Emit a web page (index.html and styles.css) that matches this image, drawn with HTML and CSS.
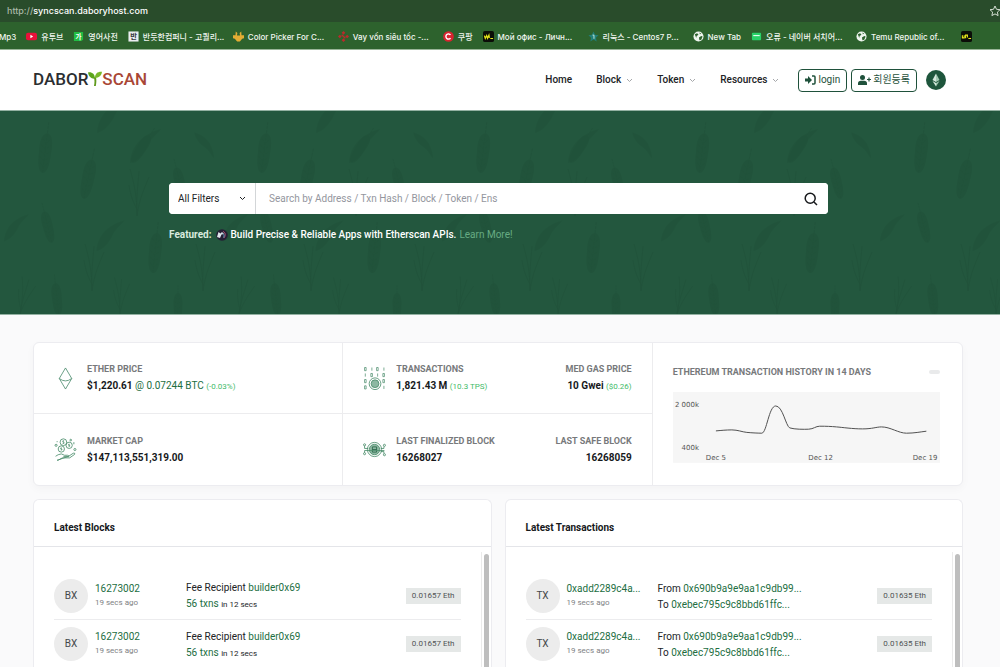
FILE: index.html
```html
<!DOCTYPE html>
<html lang="en">
<head>
<meta charset="utf-8">
<meta name="viewport" content="width=device-width, initial-scale=1">
<title>Dabory Scan</title>
<link rel="stylesheet" href="styles.css">
</head>
<body>
<div class="browser">
  <div class="address-bar">
    <span class="url"><span class="scheme">http://</span>syncscan.daboryhost.com</span>
    <svg class="star" viewBox="0 0 12 12" fill="none" stroke="#d5dfd3" stroke-width="1"><path d="M6 1l1.500 3.300 3.500.4-2.600 2.400.7 3.500L6 8.900l-3.100 1.700.7-3.500L1 4.700l3.500-.4z"/></svg>
  </div>
  <nav class="bookmarks" aria-label="Bookmarks">
    <a class="mark first" href="#">Mp3</a>
    <a class="mark" href="#"><svg viewBox="0 0 12 12"><rect y="2" width="12" height="8" rx="2.200" fill="#e8113a"/><path d="M4.800 4.200v3.600L7.800 6z" fill="#fff"/></svg><span>유투브</span></a>
    <a class="mark" href="#"><svg viewBox="0 0 12 12"><path d="M1 1h10v8.500L9 11H1z" fill="#22bd43"/><text x="6" y="9" text-anchor="middle" class="ico-ko light">가</text></svg><span>영어사전</span></a>
    <a class="mark long" href="#"><svg viewBox="0 0 12 12"><rect x=".5" y=".5" width="11" height="11" fill="#e9edf0"/><text x="6" y="9" text-anchor="middle" class="ico-ko dark">반</text></svg><span>반듯한컴퍼니 - 고퀄리...</span></a>
    <a class="mark long" href="#"><svg viewBox="0 0 12 12"><path d="M3 .5l1.800 1.800L4.300 5h3.400l-.5-2.700L9 .5l.3 4H12v3.300l-2 .7L7.500 11.500h-3L2 8.500l-2-.7V4.500h2.700z" fill="#e3ad34"/></svg><span>Color Picker For C...</span></a>
    <a class="mark long" href="#"><svg viewBox="0 0 12 12" fill="#b92a2b"><path d="M6 0l2 2-2 2-2-2zM6 8l2 2-2 2-2-2zM2 4l2 2-2 2-2-2zM10 4l2 2-2 2-2-2z"/><path d="M4 4l4 4" stroke="#b92a2b" stroke-width="1.500"/></svg><span>Vay vốn siêu tốc -...</span></a>
    <a class="mark" href="#"><svg viewBox="0 0 12 12"><circle cx="6" cy="6" r="5.800" fill="#d8232f"/><path d="M8.200 4.300a2.800 2.800 0 1 0 0 3.400" fill="none" stroke="#fff" stroke-width="1.500"/></svg><span>쿠팡</span></a>
    <a class="mark long" href="#"><svg viewBox="0 0 12 12"><rect width="12" height="12" rx="2" fill="#0b0d08"/><path d="M1.500 5l1 3L4 5l1 3 1.500-3.500L7 7.500M8 8.200h3" fill="none" stroke="#e5e619" stroke-width="1.300"/></svg><span>Мой офис - Личн...</span></a>
    <a class="mark long" href="#"><svg viewBox="0 0 12 12"><path d="M6 .5l1.700 3.700 3.800.5-2.800 2.700.7 4L6 9.400l-3.400 2 .7-4L.5 4.700l3.800-.5z" fill="#217f78"/><path d="M5 4.500h1.500v4" stroke="#cdeedf" fill="none"/></svg><span>리눅스 - Centos7 P...</span></a>
    <a class="mark" href="#"><svg viewBox="0 0 12 12"><use href="#globe"/></svg><span>New Tab</span></a>
    <a class="mark long" href="#"><svg viewBox="0 0 12 12"><rect x="1" y="2" width="10" height="8" rx="1" fill="#29d268"/><path d="M2.500 5h7" stroke="#e5fff0" stroke-width="1.200"/></svg><span>오류 - 네이버 서치어...</span></a>
    <a class="mark long" href="#"><svg viewBox="0 0 12 12"><use href="#globe"/></svg><span>Temu Republic of...</span></a>
    <a class="mark" href="#" aria-label="Office"><svg viewBox="0 0 12 12"><rect width="12" height="12" rx="2" fill="#0b0d08"/><path d="M1.500 4.500v3h2v-3M5 8V4.500h2V7M8 8.200h3" fill="none" stroke="#e5e619" stroke-width="1.200"/></svg></a>
  </nav>
</div>

<header class="site-header">
  <a class="logo" href="#" aria-label="Dabory Scan"><span>DABOR</span><svg viewBox="0 0 14 15"><path d="M6 15C6.700 11.500 6.700 8.500 5.800 6.500L8 6c.6 3 .4 6-.2 9z" fill="#5f9a1c"/><path d="M6.800 7.600C3.500 8 .8 6 0 1.500 3.800.8 7 3 6.800 7.600z" fill="#5ca51c"/><path d="M6.900 6.800C7 2.500 9.800.4 14 .8 13.500 4.500 11 7.200 6.900 6.800z" fill="#78b82a"/></svg><span class="scan">SCAN</span></a>
  <nav class="menu" aria-label="Main">
    <a href="#">Home</a>
    <a href="#">Block<svg viewBox="0 0 7 5"><path d="M1 1l2.500 2.500L6 1"/></svg></a>
    <a href="#">Token<svg viewBox="0 0 7 5"><path d="M1 1l2.500 2.500L6 1"/></svg></a>
    <a href="#">Resources<svg viewBox="0 0 7 5"><path d="M1 1l2.500 2.500L6 1"/></svg></a>
  </nav>
  <div class="account">
    <button type="button" class="btn"><svg width="11" height="10" viewBox="0 0 11 10"><path d="M0 3.500h3V1l4 4-4 4V6.500H0z" fill="#1f513b"/><path d="M7 1h2q1 0 1 1v6q0 1-1 1H7" fill="none" stroke="#1f513b" stroke-width="1.500"/></svg>login</button>
    <button type="button" class="btn"><svg width="13" height="10" viewBox="0 0 13 10" fill="#1f513b"><circle cx="4.500" cy="2.500" r="2.500"/><path d="M0 10V8.500Q0 5.700 3 5.700h3q3 0 3 2.800V10zM10.400 2.500h1.200v1.400H13v1.200h-1.400v1.400h-1.200V5.100H9V3.900h1.400z"/></svg>회원등록</button>
    <button type="button" class="network" aria-label="Network"><svg width="20" height="20" viewBox="0 0 20 20"><path d="M10 3.500L6.500 10l3.500 2z" fill="#d5e8dc"/><path d="M10 3.500l3.500 6.500-3.500 2z" fill="#a3c9b3"/><path d="M6.500 11l3.500 2v3.500z" fill="#d5e8dc"/><path d="M13.500 11L10 13v3.500z" fill="#a3c9b3"/></svg></button>
  </div>
</header>

<main>
<section class="hero">
  <svg class="wheat" aria-hidden="true">
    <defs>
      <symbol id="globe" viewBox="0 0 12 12"><circle cx="6" cy="6" r="5.500" fill="#eef5ee"/><path d="M2 3.500l2.500-1 1.500 1.500-2 1.500-.5 2zM6.500 7l2.500-1.500 1.500.5-1.500 3.500-2 .5zM7 1.500L9 3 7.500 3.500z" fill="#2d622d"/></symbol>
      <g id="ear"><path d="M0-20C5-19 7-12 6 0 6 12 4 20 0 20S-6 12-6 0C-7-12-5-19 0-20z" opacity=".6"/><path d="M-4-14l4 4 4-4M-5-8l5 4 5-4M-5-2l5 4 5-4M-5 4l5 4 5-4M-4 10l4 4 4-4M0-31V20" fill="none" stroke="#19432f" stroke-width="1" stroke-dasharray="3 1" opacity=".7"/></g>
      <path id="leaf" d="M-15 18C-14 4-6-10 16-16 14-12 6-8 2 2-2 10-8 16-15 18z" opacity=".5"/>
      <g id="grass" fill="none" stroke="#19432f" stroke-width="1" opacity=".7"><path d="M0 25C0 5-3-8-7-22M0 25C-1 5 1-5 2-20M0 25C2 8 8-4 12-14M1 20C-6 8-7 0-8-6"/></g>
      <pattern id="field" width="219" height="204" patternUnits="userSpaceOnUse" fill="#173f2c">
        <use href="#ear" transform="translate(45 42) rotate(7)"/>
        <use href="#ear" transform="translate(88 68) rotate(12)"/>
        <use href="#leaf" transform="translate(145 34)"/>
        <use href="#ear" transform="translate(141 38) rotate(33) scale(.8)"/>
        <use href="#leaf" transform="translate(112 4)"/>
        <use href="#grass" transform="translate(137 80)"/>
        <use href="#ear" transform="translate(48 116) rotate(-14) scale(.8)"/>
        <use href="#leaf" transform="translate(110 124) scale(.9)"/>
        <use href="#leaf" transform="translate(16 116) scale(.8)"/>
        <use href="#ear" transform="translate(155 142) rotate(6)"/>
        <use href="#grass" transform="translate(92 155)"/>
        <use href="#grass" transform="translate(203 155)"/>
        <use href="#grass" transform="translate(24 184) rotate(12) scale(.8)"/>
        <use href="#grass" transform="translate(120 184) scale(.8)"/>
        <use href="#ear" transform="translate(57 188) rotate(-6) scale(.8)"/>
        <use href="#ear" transform="translate(178 196) scale(.7)"/>
        <use href="#ear" transform="translate(180 72) rotate(-14) scale(.8)"/>
        <use href="#leaf" transform="translate(205 34) rotate(100) scale(.7)"/>
      </pattern>
    </defs>
    <rect width="100%" height="100%" fill="url(#field)"/>
  </svg>
  <div class="hero-inner">
    <form class="search">
      <div class="filter">
        <select aria-label="Filter"><option>All Filters</option></select>
        <svg viewBox="0 0 7 5"><path d="M1 1l2.500 2.500L6 1"/></svg>
      </div>
      <input type="text" aria-label="Search" placeholder="Search by Address / Txn Hash / Block / Token / Ens">
      <button type="button" aria-label="Search"><svg width="14" height="14" viewBox="0 0 14 14" fill="none" stroke="#17191c" stroke-width="1.500"><circle cx="6.200" cy="6.200" r="5"/><path d="M10 10l3 3"/></svg></button>
    </form>
    <p class="featured"><b>Featured:</b><svg width="12" height="12" viewBox="0 0 12 12"><circle cx="6" cy="6" r="5.800" fill="#251f35"/><path d="M1 8l1.500-5 2 1.500L6 3l2 2-2.500.5L4 9z" fill="#dfe5ea"/><path d="M7 2.500C10 3.500 9.500 7 8 9" fill="none" stroke="#bb5478"/><path d="M7 4.500c1.500 1 1 3 .5 4" fill="none" stroke="#61a7c9"/></svg><span>Build Precise &amp; Reliable Apps with Etherscan APIs.</span><a href="#">Learn More!</a></p>
  </div>
</section>

<div class="content">
<section class="stats">
  <div class="stat">
    <svg viewBox="0 0 22 24" fill="none" stroke="#3f8463" stroke-width=".8"><path d="M11 1L4.500 12 11 23l6.500-11zM4.500 12q6.500 5 13 0"/></svg>
    <div><h3>ETHER PRICE</h3><p>$1,220.61 <a href="#">@ 0.07244 BTC</a> <small>(-0.03%)</small></p></div>
  </div>
  <div class="stat">
    <svg viewBox="0 0 22 22" fill="none" stroke="#4b8d6c" stroke-width=".8"><g stroke-width=".7"><path d="M3 .5H1.500v3H3zM8.500.5v3M14.500.5H13v3h1.500zM20 .5v3M2.200 6.200v3M9 6.200H7.500v3H9zM14 6.200v3M20.500 6.200H19v3h1.500zM3 12H1.500v3H3zM3 18H1.500v3H3zM20.500 12H19v3h1.500zM20 18v3"/></g><circle cx="11.500" cy="16" r="5.600"/><circle cx="11.500" cy="16" r="3.700" fill="#8db8a2"/></svg>
    <div><h3>TRANSACTIONS</h3><p>1,821.43 M <small>(10.3 TPS)</small></p></div>
    <div class="end"><h3>MED GAS PRICE</h3><p>10 Gwei <small>($0.26)</small></p></div>
  </div>
  <div class="stat">
    <svg viewBox="0 0 22 22" fill="none" stroke="#4b8d6c" stroke-width=".8"><circle cx="9" cy="4" r="3.200"/><circle cx="14.500" cy="7" r="3"/><circle cx="7" cy="10.500" r="3"/><path d="M9.700 2.700H8.500v1.200h1v1.300H8.300M15 6h-1v1h1v1h-1M7.500 9.500h-1v1h1v1h-1"/><circle cx="2" cy="7" r="1"/><circle cx="20" cy="11" r="1"/><circle cx="16" cy="2" r=".8"/><path d="M19 4v2M3 3v1M1.500 17.500l2.500-1.500 3-.8 3 1.300h3q1.500 0 1 1.300H9M14 17.500l4.500-3q2-.4 1.200 1.200L15 19H8l-3.500 2-1.500.3z"/></svg>
    <div><h3>MARKET CAP</h3><p>$147,113,551,319.00</p></div>
  </div>
  <div class="stat">
    <svg viewBox="0 0 22 22" fill="none" stroke="#4b8d6c" stroke-width=".8"><circle cx="11" cy="11" r="6.800"/><circle cx="11" cy="11" r="5" fill="#8db8a2"/><path d="M9 8.500h4v5H9zM9 11h4" stroke="#286547"/><path d="M1.500 12h19M1.500 7.500V10H5M1.500 12v2M17 10h3V8M17 13h3v2"/><circle cx="1.500" cy="6.500" r="1"/><circle cx="1.500" cy="15" r="1"/><circle cx="20.500" cy="7" r="1"/><circle cx="20.500" cy="16" r="1"/></svg>
    <div><h3>LAST FINALIZED BLOCK</h3><p>16268027</p></div>
    <div class="end"><h3>LAST SAFE BLOCK</h3><p>16268059</p></div>
  </div>
  <div class="history">
    <div class="history-head"><h3>ETHEREUM TRANSACTION HISTORY IN 14 DAYS</h3><span class="pill"></span></div>
    <svg class="chart" viewBox="0 0 268 71" role="img" aria-label="Transactions from Dec 5 to Dec 19">
      <rect width="268" height="71" fill="#f6f6f6"/>
      <path d="M43 39C49 38.500 53 38 59 38S69 40 74 40.500 86 41.300 89 41.300C94 41 96 14 103 14S113 34 117 36C122 37.500 131 37.500 136 37.300S143 34.300 147 34.300C154 34.300 158 34.500 164 35S180 37 190 37 204 35 209 35C218 35 226 41.300 234 41.300S248 40 254 39.300" fill="none" stroke="#505050"/>
      <g><text x="26" y="15" text-anchor="end">2 000k</text><text x="26" y="58" text-anchor="end">400k</text><text x="43" y="68" text-anchor="middle">Dec 5</text><text x="148" y="68" text-anchor="middle">Dec 12</text><text x="265" y="68" text-anchor="end">Dec 19</text></g>
    </svg>
  </div>
</section>

<div class="panels">
  <section class="panel">
    <h2>Latest Blocks</h2>
    <div class="scroller">
      <ul>
        <li><span class="tag">BX</span><div class="id"><a href="#">16273002</a><small>19 secs ago</small></div><div class="info"><p>Fee Recipient <a href="#">builder0x69</a></p><p><a href="#">56 txns</a> <small>in 12 secs</small></p></div><span class="eth">0.01657 Eth</span></li>
        <li><span class="tag">BX</span><div class="id"><a href="#">16273002</a><small>19 secs ago</small></div><div class="info"><p>Fee Recipient <a href="#">builder0x69</a></p><p><a href="#">56 txns</a> <small>in 12 secs</small></p></div><span class="eth">0.01657 Eth</span></li>
      </ul>
      <div class="track"><div class="thumb"></div></div>
    </div>
  </section>
  <section class="panel">
    <h2>Latest Transactions</h2>
    <div class="scroller">
      <ul>
        <li><span class="tag">TX</span><div class="id"><a href="#">0xadd2289c4a...</a><small>19 secs ago</small></div><div class="info"><p>From <a href="#">0x690b9a9e9aa1c9db99...</a></p><p>To <a href="#">0xebec795c9c8bbd61ffc...</a></p></div><span class="eth">0.01635 Eth</span></li>
        <li><span class="tag">TX</span><div class="id"><a href="#">0xadd2289c4a...</a><small>19 secs ago</small></div><div class="info"><p>From <a href="#">0x690b9a9e9aa1c9db99...</a></p><p>To <a href="#">0xebec795c9c8bbd61ffc...</a></p></div><span class="eth">0.01635 Eth</span></li>
      </ul>
      <div class="track"><div class="thumb"></div></div>
    </div>
  </section>
</div>
</div>
</main>
</body>
</html>
```

FILE: styles.css
```css
* { box-sizing: border-box; }

body {
  margin: 0;
  height: 100vh;
  overflow: hidden;
  display: flex;
  flex-direction: column;
  background: #fafafb;
  color: #212326;
  font: 10px/16px Roboto, "Noto Sans CJK KR", sans-serif;
}

main {
  flex: 1;
  min-height: 0;
  display: flex;
  flex-direction: column;
}

a { color: #226e3f; text-decoration: none; }
h2, h3, p, ul { margin: 0; padding: 0; }
button, input, select { font: inherit; border: 0; padding: 0; margin: 0; }
svg { flex: none; display: block; }

/* Browser bars */
.browser { flex: none; font-family: Inter, "Noto Sans CJK KR", sans-serif; }
.address-bar {
  display: flex;
  justify-content: space-between;
  align-items: center;
  height: 22px;
  padding-left: 7px;
  background: #294c2b;
  color: #fff;
  font-size: 9px;
  font-weight: 500;
  overflow: hidden;
}
.scheme { color: #a9b9a8; }
.star { width: 12px; height: 12px; margin-right: -1px; }
.bookmarks {
  display: flex;
  align-items: center;
  gap: 10px;
  height: 28px;
  padding-top: 2px;
  background: #2d622d;
  border-bottom: 1px solid #99b598;
  overflow: hidden;
}
.mark {
  display: flex;
  align-items: center;
  gap: 4px;
  flex: none;
  color: #f1f6f0;
  font-size: 8px;
  font-weight: 500;
  white-space: nowrap;
}
.mark.first { margin-left: -1px; }
.mark.long { width: 95px; }
.mark svg { width: 11px; height: 11px; }
.ico-ko { font: 700 7px "Noto Sans CJK KR", sans-serif; }
.ico-ko.light { fill: #fff; }
.ico-ko.dark { font-size: 8px; fill: #33383c; }

/* Site header */
.site-header {
  display: flex;
  align-items: center;
  flex: none;
  height: 61px;
  padding: 0 54px 0 33px;
  background: #fff;
  border-bottom: 1px solid #93b1a2;
}
.logo {
  display: flex;
  align-items: center;
  margin-right: auto;
  padding-bottom: 3px;
  color: #2b2e31;
  font-size: 17px;
  font-weight: 500;
}
.logo svg { width: 14px; height: 15px; }
.logo .scan { color: #a94736; }
.menu { display: flex; gap: 24px; margin-right: 19px; }
.menu a {
  display: flex;
  align-items: center;
  gap: 5px;
  color: #212326;
  font-weight: 500;
}
.menu svg { width: 7px; height: 5px; fill: none; stroke: #a5a7aa; }
.account { display: flex; align-items: center; gap: 4px; }
.btn {
  display: flex;
  align-items: center;
  gap: 2px;
  height: 23px;
  padding: 0 6px;
  border: 1px solid #1f513b;
  border-radius: 4px;
  background: #fff;
  color: #1f513b;
  font-size: 10px;
}
.network {
  width: 20px;
  height: 20px;
  margin-left: 5px;
  border-radius: 50%;
  background: #1e553c;
}

/* Hero */
.hero { position: relative; flex: none; background: #23573e; border-bottom: 1px solid #93b1a2; }
.wheat { position: absolute; inset: 0; width: 100%; height: 100%; opacity: .25; }
.hero-inner { position: relative; padding: 72px 172px 71px 169px; }
.search {
  display: flex;
  height: 31px;
  border-radius: 4px;
  background: #fff;
  overflow: hidden;
}
.filter { position: relative; width: 87px; border-right: 1px solid #d3d6d8; }
.filter select {
  appearance: none;
  width: 100%;
  height: 100%;
  padding: 0 9px;
  background: #fff;
  color: #212326;
}
.filter svg {
  position: absolute;
  top: 13px;
  right: 9px;
  width: 7px;
  height: 5px;
  fill: none;
  stroke: #212326;
  pointer-events: none;
}
.search input { flex: 1; min-width: 0; padding: 0 13px; background: #fff; }
.search input::placeholder { color: #94969e; opacity: 1; }
.search button {
  display: grid;
  place-items: center;
  width: 34px;
  background: #fff;
}
.featured {
  display: flex;
  align-items: center;
  gap: 3px;
  margin-top: 13px;
  color: #fff;
  font-weight: 500;
}
.featured b { margin-right: 1px; color: #d9ebdf; }
.featured a { color: #67ab83; font-weight: 400; }

/* Content */
.content {
  flex: 1;
  min-height: 0;
  display: flex;
  flex-direction: column;
  padding: 27px 37px 0 33px;
}
.stats {
  flex: none;
  display: grid;
  grid-template-columns: repeat(3, 1fr);
  grid-template-rows: auto auto;
  border: 1px solid #ececf0;
  border-radius: 6px;
  background: #fff;
  box-shadow: 0 3px 8px #00000008;
}
.stat {
  display: flex;
  align-items: center;
  gap: 10px;
  height: 71px;
  padding: 0 20px;
  border-right: 1px solid #ececee;
}
.stat:nth-child(-n+2) { border-bottom: 1px solid #ececee; }
.stat > svg { width: 23px; height: 23px; }
.stat .end { margin-left: auto; text-align: right; }
h3 { color: #77797b; font-size: 9px; line-height: 16px; font-weight: 700; white-space: nowrap; }
.stat p { color: #17191c; font-weight: 700; line-height: 17px; white-space: nowrap; }
.stat p a { font-weight: 400; }
.stat small { color: #43bb69; font-size: 8px; font-weight: 400; }
.history { grid-column: 3; grid-row: 1 / 3; padding: 21px 22px 0 20px; }
.history-head { display: flex; justify-content: space-between; align-items: center; }
.pill { width: 11px; height: 4px; border-radius: 2px; background: #e9eaeb; }
.chart { width: 100%; margin-top: 12px; }
.chart text { font: 7px "DejaVu Sans", sans-serif; fill: #555; }

.panels {
  flex: 1;
  min-height: 0;
  display: grid;
  grid-template-columns: 1fr 1fr;
  grid-template-rows: minmax(0, 1fr);
  gap: 13px;
  margin-top: 13px;
}
.panel {
  display: flex;
  flex-direction: column;
  min-width: 0;
  border: 1px solid #ececf0;
  border-bottom: 0;
  border-radius: 6px 6px 0 0;
  background: #fff;
  overflow: hidden;
}
h2 {
  padding: 20px 20px 11px;
  border-bottom: 1px solid #e4e5e9;
  color: #17191c;
  font-size: 10px;
  line-height: 15px;
  font-weight: 700;
}
.scroller { flex: 1; min-height: 0; display: flex; padding-top: 5px; }
ul { flex: 1; min-width: 0; padding: 20px 20px 0; list-style: none; }
li {
  display: flex;
  align-items: center;
  height: 48px;
  border-bottom: 1px solid #ececee;
}
li:last-child { border-bottom: 0; }
.tag {
  display: grid;
  place-items: center;
  width: 34px;
  height: 34px;
  margin-right: 7px;
  border-radius: 50%;
  background: #ececec;
  color: #45484b;
}
.id { width: 91px; }
.id a, .id small { display: block; line-height: 14px; }
.id small { color: #808284; font-size: 8px; }
.info { margin-right: auto; padding-top: 2px; white-space: nowrap; }
.info small { font-size: 8px; }
.eth {
  padding: 0 6px;
  background: #e5e8e7;
  color: #505355;
  font-size: 8px;
}
.track { width: 10px; padding: 2px 2px 0; border-left: 1px solid #ebebeb; }
.thumb { width: 5px; height: 100%; border-radius: 3px 3px 0 0; background: #bebebe; }
```
